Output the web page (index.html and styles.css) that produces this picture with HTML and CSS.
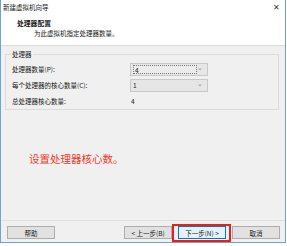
FILE: index.html
```html
<!DOCTYPE html>
<html lang="zh-CN">
<head>
  <meta charset="UTF-8">
  <title>新建虚拟机向导</title>
  <link rel="stylesheet" href="styles.css">
</head>
<body>
  <div class="window">
    <div class="titlebar">
      <span class="title">新建虚拟机向导</span>
      <span class="close">✕</span>
    </div>

    <div class="header">
      <h1>处理器配置</h1>
      <p>为此虚拟机指定处理器数量。</p>
    </div>

    <div class="content">
      <div class="group">
        <span class="group-label">处理器</span>
        <div class="row">
          <span class="label">处理器数量(P):</span>
          <div class="combo focused"><span class="value">4</span><span class="arrow">⌄</span></div>
        </div>
        <div class="row">
          <span class="label">每个处理器的核心数量(C):</span>
          <div class="combo"><span class="value">1</span><span class="arrow">⌄</span></div>
        </div>
        <div class="row">
          <span class="label">总处理器核心数量:</span>
          <span class="total">4</span>
        </div>
      </div>

      <div class="note">设置处理器核心数。</div>
    </div>

    <div class="footer">
      <button class="btn">帮助</button>
      <div class="spacer"></div>
      <button class="btn">&lt; 上一步(B)</button>
      <button class="btn next">下一步(N) &gt;</button>
      <button class="btn">取消</button>
    </div>
  </div>
</body>
</html>
```

FILE: styles.css
```css
* {
  margin: 0;
  padding: 0;
  box-sizing: border-box;
}

body {
  background: #fff;
  font-family: 'Noto Sans CJK SC', 'Noto Sans', sans-serif;
  font-size: 6.5px;
  color: #1a1a1a;
}

.window {
  width: 286px;
  height: 243px;
  border: 1px solid #6aa3df;
  border-top: none;
  display: flex;
  flex-direction: column;
  background: #f0f0f0;
}

.titlebar {
  height: 13px;
  background: #fff;
  display: flex;
  align-items: center;
  justify-content: space-between;
  padding: 0 5px 0 2px;
}

.close {
  font-size: 8px;
  color: #333;
}

.header {
  height: 33px;
  background: #fff;
  border-bottom: 1px solid #dadada;
  padding: 6px 0 0 16px;
}

.header h1 {
  font-size: 6.8px;
  font-weight: 700;
  line-height: 9px;
}

.header p {
  line-height: 10px;
  padding-left: 17px;
}

.content {
  flex: 1;
  padding: 8px 6px 0 4px;
}

.group {
  position: relative;
  border: 1px solid #dcdcdc;
  height: 56px;
  padding: 6px 0 0 6px;
}

.group-label {
  position: absolute;
  top: -5px;
  left: 5px;
  background: #f0f0f0;
  padding: 0 1px;
  line-height: 9px;
}

.row {
  display: flex;
  align-items: center;
  height: 16px;
}

.label {
  width: 118px;
}

.combo {
  width: 78px;
  height: 13px;
  border: 1px solid #c8c8c8;
  background: #e6e6e6;
  display: flex;
  align-items: center;
  justify-content: space-between;
  padding: 0 4px 0 2px;
}

.combo.focused .value {
  width: 64px;
  height: 9px;
  line-height: 9px;
  border: 1px dotted #777;
  background: #ececec;
  padding-left: 1px;
}

.arrow {
  font-size: 7px;
  color: #888;
  line-height: 7px;
  margin-top: -3px;
}

.total {
  padding-left: 1px;
}

.note {
  color: #f23a2a;
  font-size: 10.5px;
  padding: 41px 0 0 24px;
}

.footer {
  height: 22px;
  border-top: 1px solid #dfdfdf;
  display: flex;
  align-items: flex-start;
  gap: 6px;
  padding: 5px 5px 0 6px;
}

.spacer {
  flex: 1;
}

.btn {
  width: 48px;
  height: 13px;
  font: inherit;
  color: #1a1a1a;
  background: #e1e1e1;
  border: 1px solid #adadad;
}

.btn.next {
  position: relative;
  background: #e5f1fb;
  border-color: #0078d7;
}

.btn.next::after {
  content: '';
  position: absolute;
  top: -3px;
  left: -7px;
  right: -6px;
  bottom: -4px;
  border: 2px solid #e8201c;
}
```
